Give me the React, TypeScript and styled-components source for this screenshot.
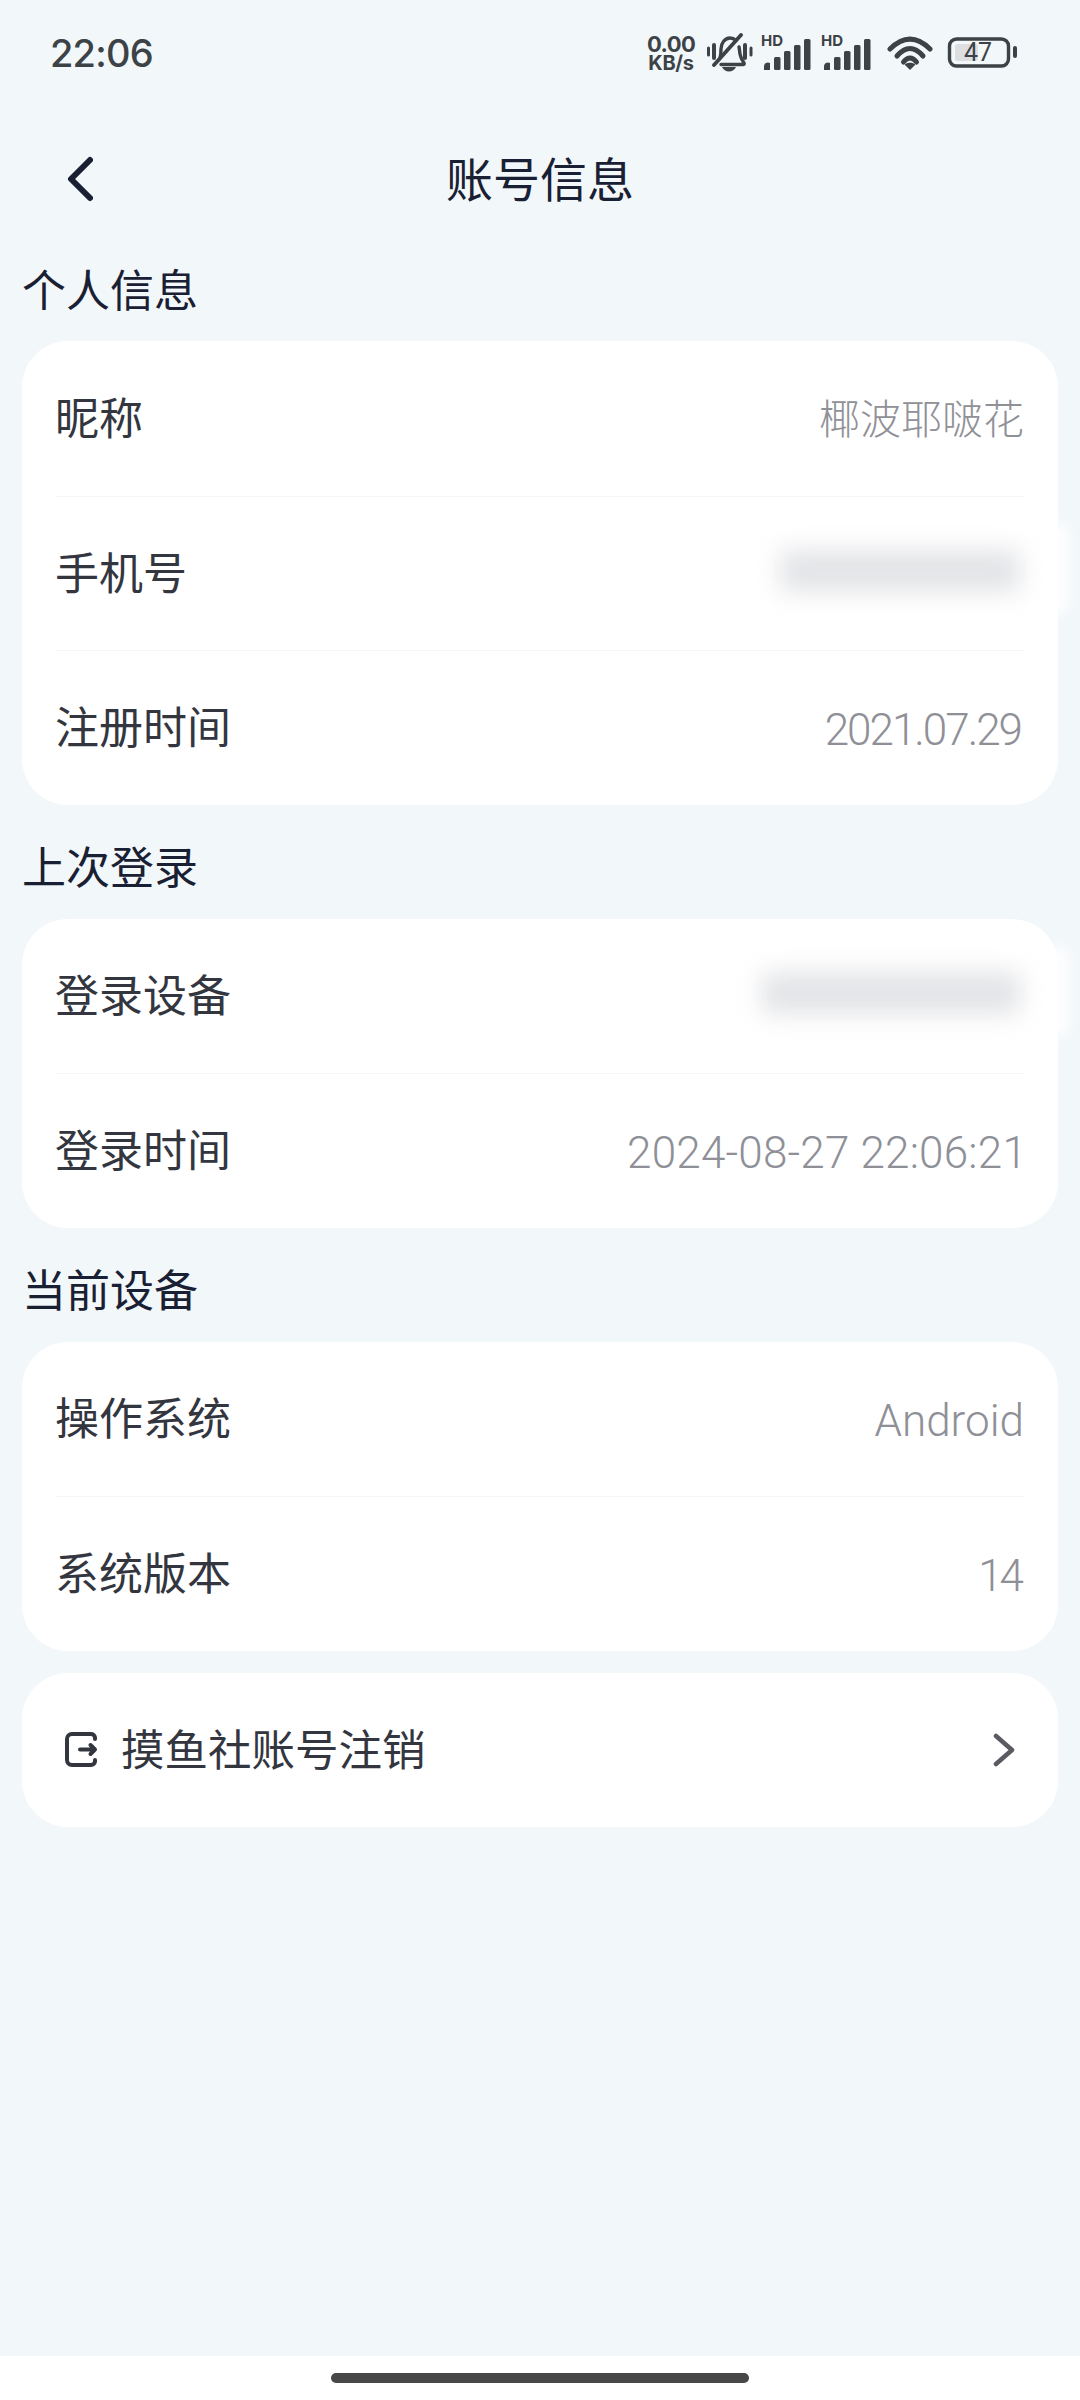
import React from "react";
import styled, { createGlobalStyle } from "styled-components";

const GlobalStyle = createGlobalStyle`
  html, body {
    margin: 0;
    padding: 0;
    background: #f2f7fa;
  }
  * {
    box-sizing: border-box;
  }
`;

const fontStack = `Roboto, "Noto Sans CJK SC", sans-serif`;

const Page = styled.div`
  width: 1080px;
  height: 2400px;
  display: flex;
  flex-direction: column;
  overflow: hidden;
  background: #f2f7fa;
  font-family: ${fontStack};
`;

const StatusBar = styled.div`
  height: 116px;
  padding: 0 63px 10px 50px;
  display: flex;
  align-items: center;
  justify-content: space-between;
  color: #3c4246;
`;

const Clock = styled.div`
  font-family: Inter, sans-serif;
  font-size: 38px;
  font-weight: 500;
  letter-spacing: -0.8px;
`;

const StatusIcons = styled.div`
  display: flex;
  align-items: center;
`;

const Speed = styled.div`
  width: 48px;
  margin-right: 12px;
  font-family: Inter, sans-serif;
  font-weight: 700;
  text-align: center;
  white-space: nowrap;
`;

const SpeedValue = styled.div`
  font-size: 22px;
  line-height: 20px;
  letter-spacing: -0.6px;
`;

const SpeedUnit = styled.div`
  font-size: 20px;
  line-height: 18px;
  letter-spacing: -0.3px;
`;

const SignalBox = styled.div`
  position: relative;
  width: 50px;
  height: 34px;
  margin-left: 10px;
`;

const HdLabel = styled.span`
  position: absolute;
  left: -2px;
  top: -3px;
  font-family: Inter, sans-serif;
  font-size: 15px;
  font-weight: 700;
  line-height: 16px;
`;

const BatteryBox = styled.div`
  position: relative;
  width: 70px;
  height: 32px;
  margin-left: 14px;
`;

const BatteryText = styled.span`
  position: absolute;
  left: 9px;
  top: 0;
  width: 44px;
  font-size: 25px;
  line-height: 32px;
  text-align: center;
`;

const NavBar = styled.div`
  position: relative;
  height: 123px;
  padding-bottom: 3px;
  display: flex;
  align-items: center;
  justify-content: center;
  color: #1a2033;
  font-size: 47px;
`;

const BackIcon = styled.svg`
  position: absolute;
  left: 63px;
  top: 40px;
`;

const Content = styled.div`
  flex: 1;
  padding: 0 22px;
`;

const Section = styled.section`
  & + & {
    margin-top: 12px;
  }
`;

const Heading = styled.h2`
  height: 102px;
  margin: 0;
  padding: 0 0 5px 0;
  display: flex;
  align-items: center;
  color: #1a2033;
  font-size: 44px;
  font-weight: 400;
`;

const Card = styled.div`
  background: #ffffff;
  border-radius: 46px;
  padding: 0 34px;
`;

const Row = styled.div`
  height: 154.5px;
  padding-bottom: 5px;
  display: flex;
  align-items: center;
  justify-content: space-between;
  & + & {
    border-top: 1.5px solid #f4f5f7;
  }
`;

const Label = styled.span`
  margin-left: -1px;
  color: #33363f;
  font-size: 44px;
`;

const Value = styled.span`
  color: #909197;
  font-size: 41px;
  font-weight: 300;
`;

// latin values sit a little lower than the chinese ones in the reference
const NumberValue = styled.span<{ $tracking?: number; $end?: number }>`
  display: block;
  margin-right: ${(p) => p.$end ?? 0}px;
  padding-top: 9px;
  color: #8f9097;
  font-size: 44px;
  font-weight: 300;
  letter-spacing: ${(p) => p.$tracking ?? 0}px;
`;

const Smudge = styled.div<{ $width: number }>`
  position: relative;
  width: ${(p) => p.$width}px;
  height: 42px;
  margin-right: 4px;
  &::before {
    content: "";
    position: absolute;
    inset: -26px -50px -22px -32px;
    background: rgba(255, 255, 255, 0.75);
    filter: blur(6px);
  }
  &::after {
    content: "";
    position: absolute;
    inset: 0;
    background: #e3e4e7;
    filter: blur(12px);
  }
`;

const ActionCard = styled(Card)`
  height: 154px;
  margin-top: 22px;
  padding: 0 43px 0 42px;
  display: flex;
  align-items: center;
  color: #33363f;
  font-size: 43.5px;
`;

const ActionLabel = styled.span`
  flex: 1;
  margin-left: 23px;
  padding-bottom: 5px;
`;

const Footer = styled.div`
  height: 44px;
  display: flex;
  align-items: flex-start;
  justify-content: center;
  padding-top: 17px;
  background: #ffffff;
`;

const HomeBar = styled.div`
  width: 418px;
  height: 10px;
  border-radius: 5px;
  background: #484848;
`;

function BellOffIcon() {
  return (
    <svg width="46" height="40" viewBox="0 0 46 40" fill="none" stroke="#3c4246" strokeLinecap="round" strokeLinejoin="round">
      <path d="M1.500 15v7M44 15v7" strokeWidth="3" />
      <path d="M7 12v13M38 12v13" strokeWidth="4" />
      <path d="M13 25c.8-2.500 1-5 1-9 0-6 4-11 9-11 2.500 0 4.500 1 6 2.500M32 14c.5 2 .5 4 1 7 .5 3 2 6 4 9 .5 1 0 1.500-1 1.500H14" strokeWidth="3.400" />
      <path d="M7 32L34 2" strokeWidth="3.800" />
      <path d="M15 34h14c-1 2.500-4 4.500-7 4.500S16 36.500 15 34z" fill="#3c4246" stroke="none" />
    </svg>
  );
}

function SignalIcon() {
  return (
    <svg width="50" height="32" viewBox="0 0 50 32" fill="#3c4246" style={{ position: "absolute", left: 0, top: 2 }}>
      <path d="M1 32v-3a4 4 0 0 1 6-4v7z" />
      <rect x="11" y="19" width="6.500" height="13" rx="1.500" />
      <rect x="21" y="13" width="6.500" height="19" rx="1.500" />
      <rect x="31" y="7" width="6.500" height="25" rx="1.500" />
      <rect x="41" y="1" width="6.500" height="31" rx="1.500" />
    </svg>
  );
}

function WifiIcon() {
  return (
    <svg width="46" height="34" viewBox="0 0 46 34" fill="none" stroke="#3c4246" strokeWidth="5" strokeLinecap="round" style={{ marginLeft: 14 }}>
      <path d="M3 13Q23 -7 43 13" />
      <path d="M10 20Q23 5 36 20" />
      <path d="M16.500 26Q23 18 29.500 26" />
      <path d="M23 34l-5.500-5.500c3-2.500 8-2.500 11 0z" fill="#3c4246" stroke="none" />
    </svg>
  );
}

function BatteryShell() {
  return (
    <svg width="70" height="32" viewBox="0 0 70 32" fill="none">
      <rect x="2.500" y="2" width="59" height="27" rx="7" stroke="#3c4246" strokeWidth="3.400" />
      <rect x="8" y="7" width="23" height="17" rx="3" fill="#dcdee0" />
      <rect x="66" y="9" width="4" height="12" rx="2" fill="#3c4246" />
    </svg>
  );
}

function ExitIcon() {
  return (
    <svg width="34" height="37" viewBox="0 0 34 37" fill="none" stroke="#33363f" strokeWidth="4" strokeLinecap="round" strokeLinejoin="round">
      <path d="M31 8V6.500A4 4 0 0 0 27 3H8a5 5 0 0 0-5 5v21a5 5 0 0 0 5 5h19a4 4 0 0 0 4-3.500V29" />
      <path d="M16 18.500h15M26.500 14l4.500 4.500-4.500 4.500" />
    </svg>
  );
}

function ChevronRightIcon() {
  return (
    <svg width="22" height="34" viewBox="0 0 22 34" fill="none" stroke="#5a5b62" strokeWidth="4.500" strokeLinecap="round" strokeLinejoin="round">
      <path d="M3 3l16 14L3 31" />
    </svg>
  );
}

export default function App() {
  return (
    <Page>
      <GlobalStyle />
      <StatusBar>
        <Clock>22:06</Clock>
        <StatusIcons>
          <Speed>
            <SpeedValue>0.00</SpeedValue>
            <SpeedUnit>KB/s</SpeedUnit>
          </Speed>
          <BellOffIcon />
          <SignalBox>
            <HdLabel>HD</HdLabel>
            <SignalIcon />
          </SignalBox>
          <SignalBox>
            <HdLabel>HD</HdLabel>
            <SignalIcon />
          </SignalBox>
          <WifiIcon />
          <BatteryBox>
            <BatteryShell />
            <BatteryText>47</BatteryText>
          </BatteryBox>
        </StatusIcons>
      </StatusBar>

      <NavBar>
        <BackIcon width="30" height="48" viewBox="0 0 30 48" fill="none" stroke="#1a2033" strokeWidth="6" strokeLinecap="round" strokeLinejoin="round">
          <path d="M27 4L8 23l19 19" />
        </BackIcon>
        账号信息
      </NavBar>

      <Content>
        <Section>
          <Heading>个人信息</Heading>
          <Card>
            <Row>
              <Label>昵称</Label>
              <Value>椰波耶啵花</Value>
            </Row>
            <Row>
              <Label>手机号</Label>
              <Smudge $width={240} />
            </Row>
            <Row>
              <Label>注册时间</Label>
              <NumberValue $tracking={-2} $end={3}>2021.07.29</NumberValue>
            </Row>
          </Card>
        </Section>

        <Section>
          <Heading>上次登录</Heading>
          <Card>
            <Row>
              <Label>登录设备</Label>
              <Smudge $width={258} />
            </Row>
            <Row>
              <Label>登录时间</Label>
              <NumberValue $tracking={0.2} $end={-3}>2024-08-27 22:06:21</NumberValue>
            </Row>
          </Card>
        </Section>

        <Section>
          <Heading>当前设备</Heading>
          <Card>
            <Row>
              <Label>操作系统</Label>
              <NumberValue>Android</NumberValue>
            </Row>
            <Row>
              <Label>系统版本</Label>
              <NumberValue $tracking={-3} $end={3}>14</NumberValue>
            </Row>
          </Card>
        </Section>

        <ActionCard>
          <ExitIcon />
          <ActionLabel>摸鱼社账号注销</ActionLabel>
          <ChevronRightIcon />
        </ActionCard>
      </Content>

      <Footer>
        <HomeBar />
      </Footer>
    </Page>
  );
}
